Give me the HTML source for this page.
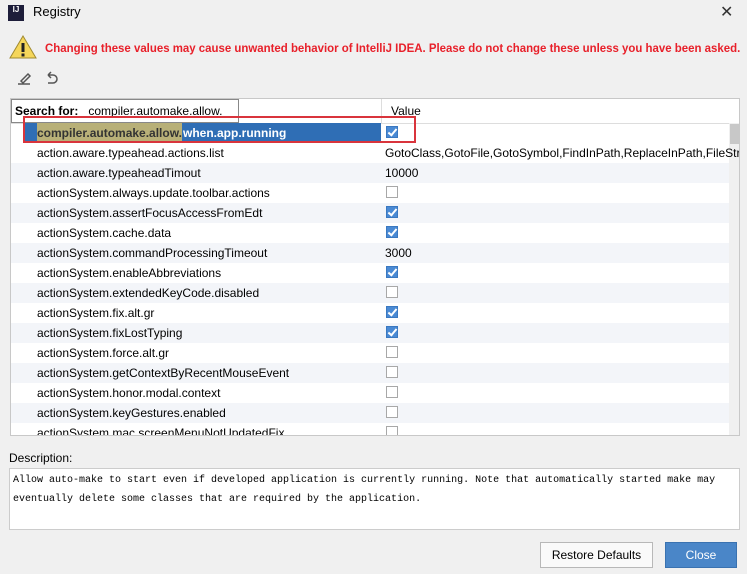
<!DOCTYPE html>
<html><head><style>
body{margin:0;width:747px;height:574px;background:#f0f0f0;font-family:"Liberation Sans",sans-serif;font-size:12px;color:#000;position:relative;overflow:hidden}
.abs{position:absolute}
.tbl{left:10px;top:98px;width:730px;height:338px;background:#fff;border:1px solid #c8c8c8;box-sizing:border-box;overflow:hidden}
.row{position:absolute;left:0;width:718px;height:20px;line-height:20px}
.row .n{position:absolute;left:26px}
.row .v{position:absolute;left:374px;white-space:nowrap}
.cb{position:absolute;left:375px;top:3px;width:12px;height:12px;border:1px solid #a8a8a8;background:#fff;box-sizing:border-box}
.cb.on{background:#4a8ad4;border-color:#3a78c0}
.cb.on:after{content:"";position:absolute;left:3px;top:0px;width:3px;height:7px;border:solid #fff;border-width:0 2px 2px 0;transform:rotate(40deg)}
</style></head><body>
<div class="abs" style="left:8px;top:5px;width:16px;height:16px;background:#1d1d3a;color:#fff;font-size:8px;font-weight:bold;line-height:10px;text-align:center">IJ</div>
<div class="abs" style="left:33px;top:4px;font-size:13px">Registry</div>
<div class="abs" style="left:720px;top:2px;font-size:16px;color:#333">✕</div>
<svg class="abs" style="left:9px;top:34px" width="28" height="26"><polygon points="14,2 27,24 1,24" fill="#f5d65a" stroke="#a08a30"/><rect x="12.5" y="9" width="3" height="9" fill="#222"/><rect x="12.5" y="19.5" width="3" height="3" fill="#222"/></svg>
<div class="abs" style="left:45px;top:41px;color:#e8202a;font-weight:bold;font-size:12px;white-space:nowrap;transform:scaleX(0.953);transform-origin:0 0">Changing these values may cause unwanted behavior of IntelliJ IDEA. Please do not change these unless you have been asked.</div>
<svg class="abs" style="left:15px;top:70px" width="45" height="18"><path d="M3 14h12M6 11l7-7 2 2-7 7z" stroke="#555" stroke-width="1.5" fill="none"/><path d="M33 5h5a4 4 0 010 8h-5M33 5l3-3M33 5l3 3" stroke="#555" stroke-width="1.5" fill="none"/></svg>
<div class="abs tbl">
<div class="abs" style="left:0;top:0;width:718px;height:24px;border-bottom:1px solid #ddd;background:#fff"></div>
<div class="abs" style="left:370px;top:0;width:1px;height:24px;background:#ddd"></div>
<div class="abs" style="left:380px;top:5px">Value</div>
<div class="abs" style="left:0;top:0;width:228px;height:24px;border:1px solid #888;box-sizing:border-box;background:#fff"></div>
<div class="abs" style="left:4px;top:5px;white-space:nowrap"><b>Search for:</b>&nbsp;&nbsp; compiler.automake.allow.</div>
<div class="abs" style="left:718px;top:24px;width:11px;height:314px;background:#f0f0f0"></div>
<div class="abs" style="left:719px;top:25px;width:9px;height:20px;background:#c8c8c8"></div>
<div class="row" style="top:24px;left:14px;width:356px;background:#2f6eb5;color:#fff;font-weight:bold"><span style="position:absolute;left:12px;background:#b8b078;color:#333">compiler.automake.allow.</span><span style="position:absolute;left:158px">when.app.running</span></div>
<div class="row" style="top:24px"><span class="cb on"></span></div>
<div class="row" style="top:44px"><span class="n">action.aware.typeahead.actions.list</span><span class="v">GotoClass,GotoFile,GotoSymbol,FindInPath,ReplaceInPath,FileStru</span></div>
<div class="row" style="top:64px;background:#f3f5f9"><span class="n">action.aware.typeaheadTimout</span><span class="v">10000</span></div>
<div class="row" style="top:84px"><span class="n">actionSystem.always.update.toolbar.actions</span><span class="cb"></span></div>
<div class="row" style="top:104px;background:#f3f5f9"><span class="n">actionSystem.assertFocusAccessFromEdt</span><span class="cb on"></span></div>
<div class="row" style="top:124px"><span class="n">actionSystem.cache.data</span><span class="cb on"></span></div>
<div class="row" style="top:144px;background:#f3f5f9"><span class="n">actionSystem.commandProcessingTimeout</span><span class="v">3000</span></div>
<div class="row" style="top:164px"><span class="n">actionSystem.enableAbbreviations</span><span class="cb on"></span></div>
<div class="row" style="top:184px;background:#f3f5f9"><span class="n">actionSystem.extendedKeyCode.disabled</span><span class="cb"></span></div>
<div class="row" style="top:204px"><span class="n">actionSystem.fix.alt.gr</span><span class="cb on"></span></div>
<div class="row" style="top:224px;background:#f3f5f9"><span class="n">actionSystem.fixLostTyping</span><span class="cb on"></span></div>
<div class="row" style="top:244px"><span class="n">actionSystem.force.alt.gr</span><span class="cb"></span></div>
<div class="row" style="top:264px;background:#f3f5f9"><span class="n">actionSystem.getContextByRecentMouseEvent</span><span class="cb"></span></div>
<div class="row" style="top:284px"><span class="n">actionSystem.honor.modal.context</span><span class="cb"></span></div>
<div class="row" style="top:304px;background:#f3f5f9"><span class="n">actionSystem.keyGestures.enabled</span><span class="cb"></span></div>
<div class="row" style="top:324px"><span class="n">actionSystem.mac.screenMenuNotUpdatedFix</span><span class="cb"></span></div>
</div>
<div class="abs" style="left:23px;top:116px;width:393px;height:27px;border:2px solid #d9343c;box-sizing:border-box"></div>
<div class="abs" style="left:9px;top:451px">Description:</div>
<div class="abs" style="left:9px;top:468px;width:731px;height:62px;background:#fff;border:1px solid #ccc;box-sizing:border-box;font-family:'Liberation Mono',monospace;font-size:10px;line-height:19px;padding:2px 3px;white-space:nowrap;overflow:hidden">Allow auto-make to start even if developed application is currently running. Note that automatically started make may<br>eventually delete some classes that are required by the application.</div>
<div class="abs" style="left:540px;top:542px;width:113px;height:26px;background:#fafafa;border:1px solid #b8b8b8;box-sizing:border-box;text-align:center;line-height:24px">Restore Defaults</div>
<div class="abs" style="left:665px;top:542px;width:72px;height:26px;background:#4a86c8;border:1px solid #3a72b0;box-sizing:border-box;text-align:center;line-height:24px;color:#fff">Close</div>
</body></html>
